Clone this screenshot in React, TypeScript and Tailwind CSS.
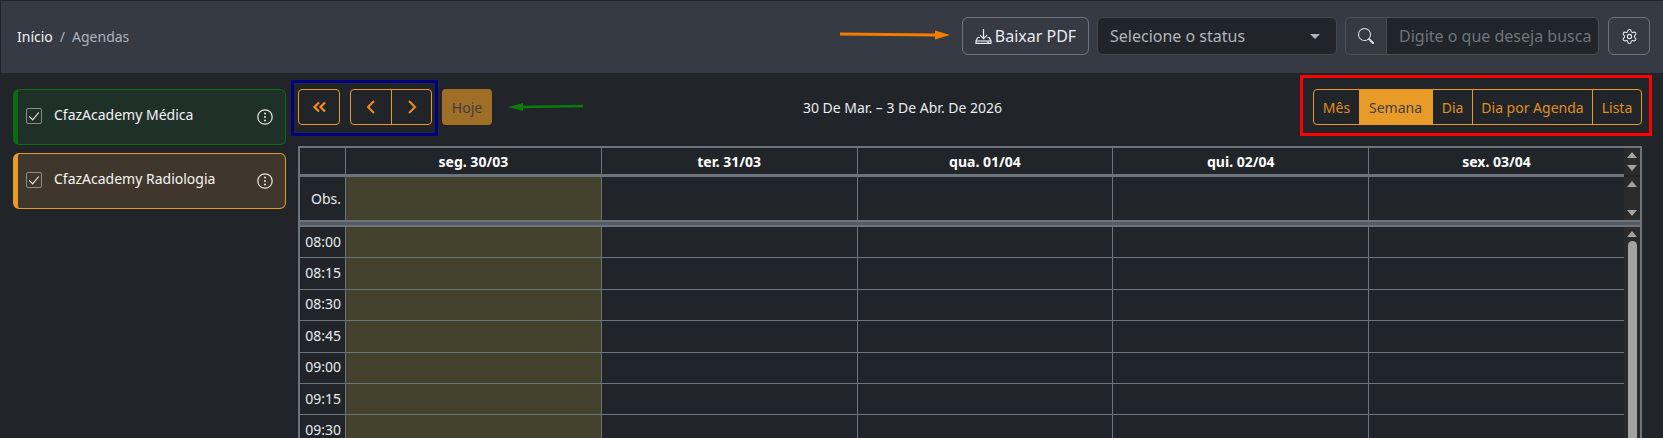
import { BsSearch } from "react-icons/bs";
import { Settings } from "lucide-react";

const days = ["seg. 30/03", "ter. 31/03", "qua. 01/04", "qui. 02/04", "sex. 03/04"];
const times = ["08:00", "08:15", "08:30", "08:45", "09:00", "09:15", "09:30"];
const views = [
  { label: "Mês", width: "w-[45px]" },
  { label: "Semana", width: "w-[73px]" },
  { label: "Dia", width: "w-[40px]" },
  { label: "Dia por Agenda", width: "w-[120px]" },
  { label: "Lista", width: "w-[49px]" },
];

const agendas = [
  {
    name: "CfazAcademy Médica",
    className: "border-[#0c6b12] bg-[#1e3028]",
  },
  {
    name: "CfazAcademy Radiologia",
    className: "border-[#e89b26] bg-[#40372c]",
  },
];

function Scrollbar({ thumb, height }: { thumb?: boolean; height: string }) {
  return (
    <div className={`flex w-4 shrink-0 flex-col items-center justify-between bg-[#2b2b2b] py-1 ${height}`}>
      <span className="h-0 w-0 border-x-[5px] border-b-[6px] border-x-transparent border-b-[#a3a3a3]" />
      {thumb && <span className="mt-1 h-full w-[9px] rounded-full bg-[#a3a3a3]" />}
      {!thumb && <span className="h-0 w-0 border-x-[5px] border-t-[6px] border-x-transparent border-t-[#a3a3a3]" />}
    </div>
  );
}

function InfoIcon() {
  return (
    <svg viewBox="0 0 16 16" className="h-4 w-4 text-[#e8e8e8]" fill="none">
      <circle cx="8" cy="8" r="7.2" stroke="currentColor" strokeWidth="1.2" />
      <circle cx="8" cy="4.6" r="1" fill="currentColor" />
      <circle cx="8" cy="8" r="1" fill="currentColor" />
      <circle cx="8" cy="11.4" r="1" fill="currentColor" />
    </svg>
  );
}

function DownloadIcon() {
  return (
    <svg viewBox="0 0 17 17" className="h-[17px] w-[17px] shrink-0 text-[#e9ecef]" fill="none" stroke="currentColor" strokeWidth="1.2">
      <path d="M8.5 1v9.5M5 7.2l3.5 3.5L12 7.2" />
      <path d="M4.5 9.5H2.8L1 13v2.4h15V13l-1.8-3.5h-1.7" />
      <path d="M1 13h15" />
      <circle cx="13.2" cy="14.2" r="0.3" fill="currentColor" />
    </svg>
  );
}

function Chevron({ d, width, stroke = 2 }: { d: string; width: number; stroke?: number }) {
  return (
    <svg width={width} height="14" viewBox={`0 0 ${width} 14`} fill="none" stroke="#f08c1e" strokeWidth={stroke}>
      <path d={d} />
    </svg>
  );
}

function AgendaCard({ name, className }: { name: string; className: string }) {
  return (
    <div className={`flex h-14 w-[273px] rounded-md border border-l-[5px] pl-[8px] pr-3 pt-[15px] ${className}`}>
      <span className="mt-[3px] flex h-4 w-4 shrink-0 items-center justify-center rounded-[2px] border border-[#8a8d8f]">
        <svg viewBox="0 0 16 16" className="h-[14px] w-[14px]" fill="none">
          <path d="M2.5 8.5 6.5 12.5 13.5 4" stroke="#e8e8e8" strokeWidth="1.3" />
        </svg>
      </span>
      <span className="ml-3 flex-1 text-[14px] leading-[20px] text-[#f4f4f4]">{name}</span>
      <span className="mt-1">
        <InfoIcon />
      </span>
    </div>
  );
}

export default function App() {
  return (
    <div
      className="h-[438px] w-[1663px] overflow-hidden bg-[#212529] text-[14px] text-[#e9ecef]"
      style={{ fontFamily: '"Noto Sans", "Open Sans", sans-serif' }}
    >
      {/* Header */}
      <header className="relative flex h-[73px] items-center border-l border-t border-[#212529] bg-[#353a43] pb-[2px] pl-4 pr-[13px]">
        <nav className="flex items-center gap-[7px]">
          <span className="text-[#f1f3f5]">Início</span>
          <span className="text-[#adb5bd]">/</span>
          <span className="text-[#adb5bd]">Agendas</span>
        </nav>
        {/* orange annotation */}
        <svg width="112" height="12" viewBox="0 0 112 12" className="absolute left-[838px] top-[28px]">
          <path d="M1 5 L97 6" stroke="#f57c00" strokeWidth="3" />
          <path d="M111 6 L96 1.5 L96 10.5 Z" fill="#f57c00" />
        </svg>
        <div className="ml-auto flex items-center">
          <button className="flex h-[38px] w-[127px] items-center justify-center gap-[3px] rounded-md border border-[#6c757d] text-[16px] text-[#e9ecef]">
            <DownloadIcon />
            Baixar PDF
          </button>
          <div className="ml-2 flex h-[38px] w-[240px] items-center justify-between rounded-md border border-[#3f454d] bg-[#212529] pl-3 pr-4 text-[16px] text-[#adb5bd]">
            Selecione o status
            <span className="h-0 w-0 border-x-[5px] border-t-[5px] border-x-transparent border-t-[#adb5bd]" />
          </div>
          <div className="ml-2 flex h-[38px] w-[254px] overflow-hidden rounded-md border border-[#495057]">
            <span className="flex w-[41px] shrink-0 items-center justify-center border-r border-[#495057] bg-[#343a40]">
              <BsSearch className="h-4 w-4 text-[#dee2e6]" />
            </span>
            <span className="flex-1 overflow-hidden whitespace-nowrap bg-[#212529] pl-3 text-[16px] leading-[36px] text-[#6c757d]">
              Digite o que deseja busca
            </span>
          </div>
          <button className="ml-[9px] flex h-[38px] w-[42px] items-center justify-center rounded-md border border-[#6c757d]">
            <Settings className="h-[17px] w-[17px] text-[#e9ecef]" strokeWidth={1.5} />
          </button>
        </div>
      </header>

      <div className="flex pl-[13px] pr-[21px] pt-4">
        {/* Sidebar */}
        <aside className="flex w-[285px] shrink-0 flex-col gap-2">
          {agendas.map((agenda) => (
            <AgendaCard key={agenda.name} {...agenda} />
          ))}
        </aside>

        <main className="min-w-0 flex-1">
          {/* Toolbar */}
          <div className="relative flex h-9 items-center">
            <div className="relative flex">
              <button className="flex h-9 w-[42px] items-center justify-center rounded-[4px] border border-[#e89b26]">
                <Chevron width={14} stroke={2.3} d="M7 2.5 2.5 7 7 11.5M13 2.5 8.5 7l4.5 4.5" />
              </button>
              <div className="ml-[10px] flex h-9 w-[82px] rounded-[4px] border border-[#e89b26]">
                <span className="flex w-[41px] items-center justify-center border-r border-[#e89b26]">
                  <Chevron width={10} d="M8 1 2 7l6 6" />
                </span>
                <span className="flex flex-1 items-center justify-center">
                  <Chevron width={10} d="M2 1l6 6-6 6" />
                </span>
              </div>
              {/* blue annotation */}
              <span className="absolute -bottom-[11px] -left-[7px] -right-[6px] -top-[9px] border-[3px] border-[#000080]" />
            </div>
            <button className="ml-[10px] h-9 w-[50px] rounded-[4px] bg-[#9f6e27] text-[#3f3f3f]">Hoje</button>
            {/* green annotation */}
            <svg width="76" height="10" viewBox="0 0 76 10" className="absolute left-[210px] top-[13px]">
              <path d="M14 5 L75 4" stroke="#0a7d0a" strokeWidth="2.5" />
              <path d="M0 5 L15 1 L15 9 Z" fill="#0a7d0a" />
            </svg>
            <div className="flex-1 text-center text-[#e9ecef]">30 De Mar. – 3 De Abr. De 2026</div>
            <div className="relative flex h-9 rounded-[4px] border border-[#e89b26] text-[#e08e1f]">
              {views.map(({ label, width }, i) => (
                <span
                  key={label}
                  className={`flex items-center justify-center ${width} ${i > 1 ? "border-l border-[#e89b26]" : ""} ${
                    label === "Semana" ? "bg-[#e89b26] text-[#3f3f3f]" : ""
                  }`}
                >
                  {label}
                </span>
              ))}
              {/* red annotation */}
              <span className="absolute -bottom-[12px] -left-[14px] -right-[11px] -top-[15px] border-[3px] border-[#ff0000]" />
            </div>
          </div>

          {/* Calendar */}
          <div className="mt-[21px] border-x-2 border-t-2 border-[#6c757d]">
            <div className="flex">
              <div className="flex h-[29px] flex-1 border-b-[3px] border-[#6c757d]">
                <div className="w-[45px] shrink-0" />
                {days.map((day) => (
                  <div key={day} className="flex flex-1 items-center justify-center border-l border-[#6c757d] font-bold text-white">
                    {day}
                  </div>
                ))}
              </div>
              <Scrollbar height="h-[27px]" />
            </div>
            <div className="flex">
              <div className="flex h-[43px] flex-1">
                <div className="flex w-[45px] shrink-0 items-center justify-end pr-1">Obs.</div>
                {days.map((day, i) => (
                  <div key={day} className={`flex-1 border-l border-[#6c757d] ${i === 0 ? "bg-[#44412c]" : ""}`} />
                ))}
              </div>
              <Scrollbar height="h-[43px]" />
            </div>
            <div className="h-[7px] border-y-2 border-[#6c757d] bg-[#555b62]" />
            <div className="flex">
              <div className="flex-1">
                {times.map((time) => (
                  <div key={time} className="flex h-[31.4px] border-b border-[#6c757d]">
                    <div className="flex w-[45px] shrink-0 items-center justify-end pb-[2px] pr-1">{time}</div>
                    {days.map((day, i) => (
                      <div key={day} className={`flex-1 border-l border-[#6c757d] ${i === 0 ? "bg-[#44412c]" : ""}`} />
                    ))}
                  </div>
                ))}
              </div>
              <Scrollbar thumb height="h-[220px]" />
            </div>
          </div>
        </main>
      </div>
    </div>
  );
}
